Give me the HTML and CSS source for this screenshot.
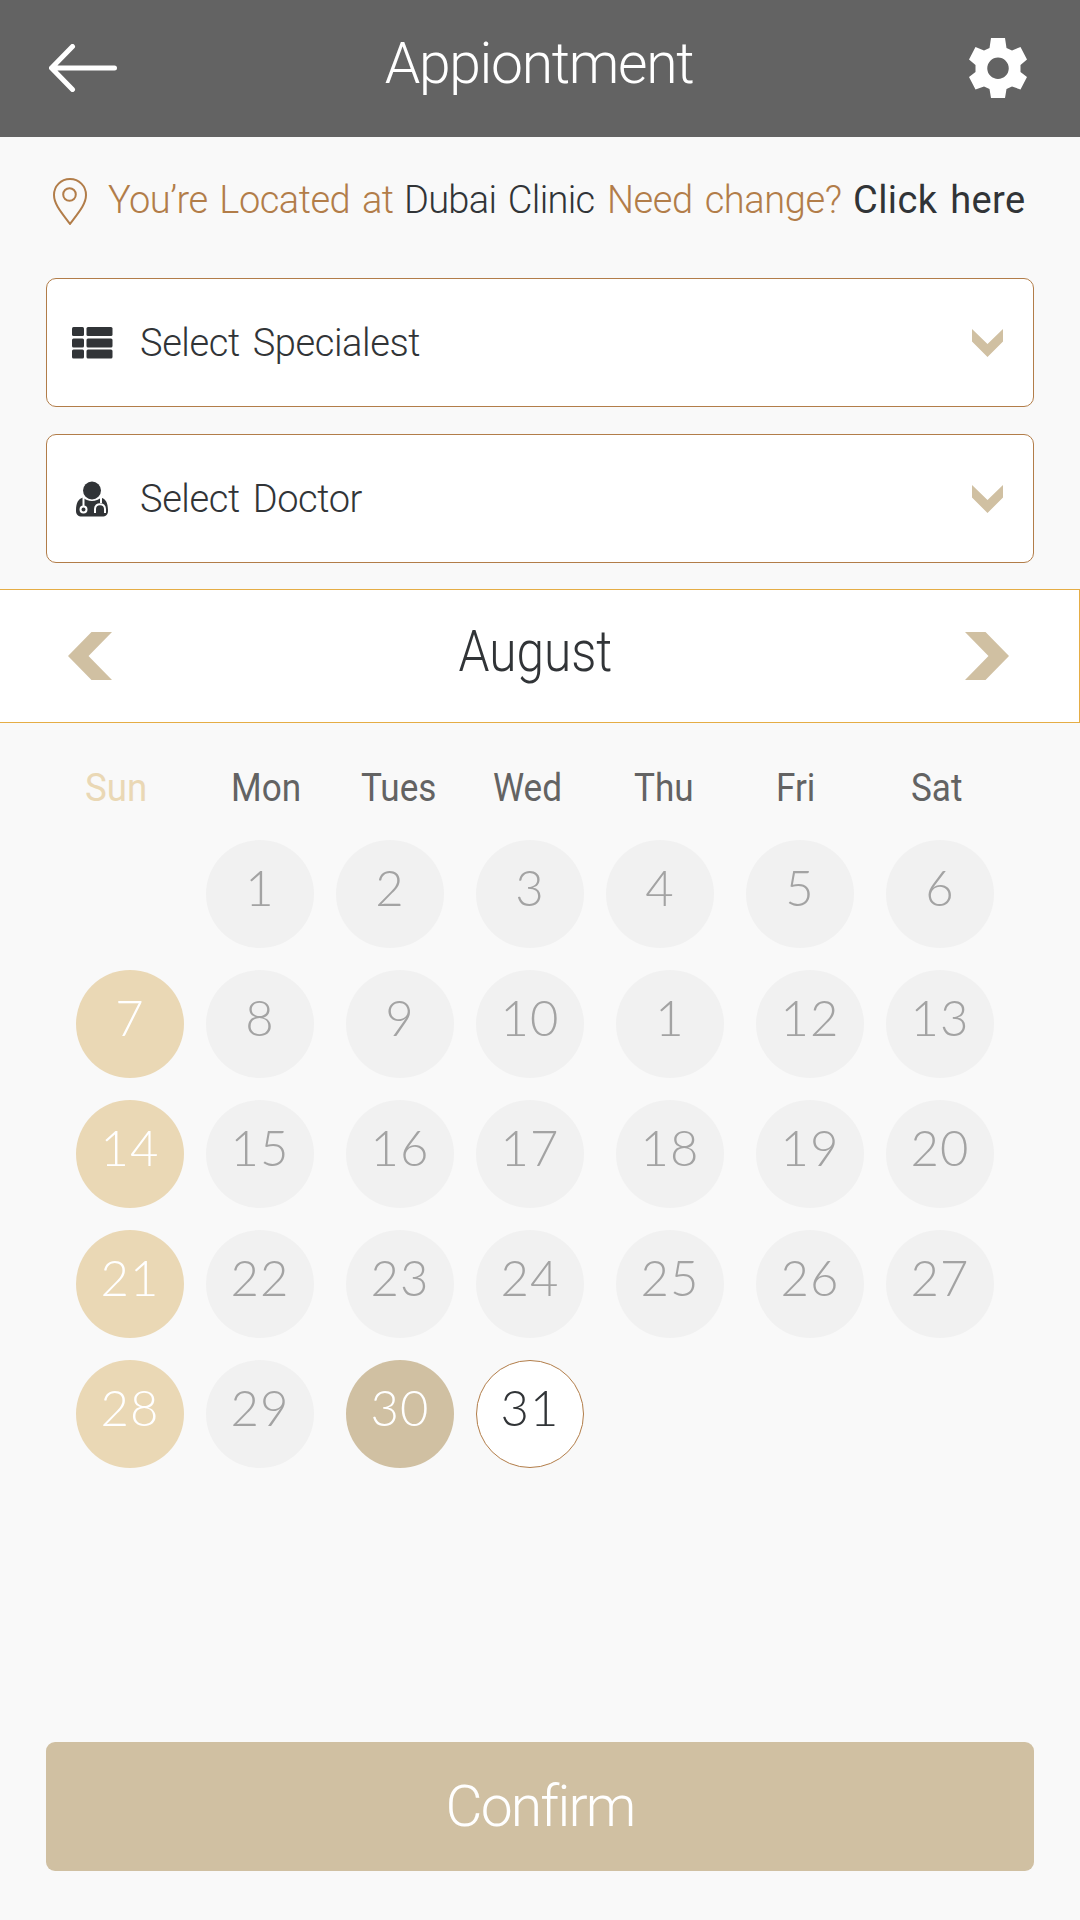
FILE: index.html
```html
<!DOCTYPE html>
<html lang="en">
<head>
  <meta charset="UTF-8" />
  <title>Appointment</title>
  <link rel="stylesheet" href="styles.css">
</head>
<body>
<header>
  <svg class="back" viewBox="0 0 68 48" width="68" height="48">
    <path d="M23.500 2.500L2.500 24L23.500 45.500M3 24H65.500" />
  </svg>
  <h1>Appiontment</h1>
  <svg class="gear" viewBox="0 0 58 60" width="58" height="60">
    <path fill-rule="evenodd" d="M22 0H36L37.500 10L43 12.500L51.500 9L58 21.500L51.500 27V34L58 39L51.500 51.500L43 48.500L37.500 51L36 60H22L20.500 51L15 48.500L6.500 51.500L0 39L6.500 34V27L0 21.500L6.500 9L15 12.500L20.500 10ZM29 19.500A10.700 10.700 0 1 0 29 41A10.700 10.700 0 1 0 29 19.500Z" />
  </svg>
</header>

<div class="location">
  <svg class="pin" viewBox="0 0 34 47" width="34" height="47">
    <path d="M17 1C8 1 1 8 1 17C1 26 8 34 17 46C26 34 33 26 33 17C33 8 26 1 17 1Z" />
    <circle cx="16.500" cy="16.500" r="6.300" />
  </svg>
  <span class="at">You’re Located at</span>
  <span class="clinic">Dubai Clinic</span>
  <span class="need">Need change?</span>
  <a class="click" href="#">Click here</a>
</div>

<div class="select">
  <svg class="icon" viewBox="0 0 44 36" width="44" height="36">
    <rect x="1" y="2" width="12" height="9" rx="1.500" />
    <rect x="15.500" y="2" width="26" height="9" rx="1.500" />
    <rect x="1" y="13.500" width="12" height="9" rx="1.500" />
    <rect x="15.500" y="13.500" width="26" height="9" rx="1.500" />
    <rect x="1" y="24.500" width="12" height="9" rx="1.500" />
    <rect x="15.500" y="24.500" width="26" height="9" rx="1.500" />
  </svg>
  <span>Select Specialest</span>
  <svg class="down" viewBox="0 0 31 28" width="31" height="28"><path d="M0 0L15.500 15L31 0V12.500L15.500 28L0 12.500Z" /></svg>
</div>

<div class="select">
  <svg class="icon" viewBox="0 0 44 36" width="44" height="36">
    <circle cx="21" cy="9.500" r="9" />
    <path d="M12 16.500C16 21 26 21 30 16.500C35 18 37 22 37 30C37 33.500 35 35.500 31 35.500H11C7 35.500 5 33.500 5 30C5 22 7 18 12 16.500Z" />
    <path class="tube" d="M12.500 16V26M30 16V22M24 32V28C24 21.500 34 21.500 34 28V32" />
    <circle class="tube" cx="12.500" cy="28.500" r="3" />
  </svg>
  <span>Select Doctor</span>
  <svg class="down" viewBox="0 0 31 28" width="31" height="28"><path d="M0 0L15.500 15L31 0V12.500L15.500 28L0 12.500Z" /></svg>
</div>

<div class="month">
  <svg viewBox="0 0 44 48" width="44" height="48"><path d="M0 24L23.500 0H44L20.500 24L44 48H23.500Z" /></svg>
  <h2>August</h2>
  <svg viewBox="0 0 44 48" width="44" height="48"><path d="M44 24L20.500 0H0L23.500 24L0 48H20.500Z" /></svg>
</div>

<div class="weekdays">
  <span class="sun">Sun</span>
  <span>Mon</span>
  <span>Tues</span>
  <span>Wed</span>
  <span>Thu</span>
  <span>Fri</span>
  <span>Sat</span>
</div>

<div class="week first">
  <div class="day">1</div>
  <div class="day">2</div>
  <div class="day">3</div>
  <div class="day">4</div>
  <div class="day">5</div>
  <div class="day">6</div>
</div>
<div class="week">
  <div class="day off">7</div>
  <div class="day">8</div>
  <div class="day">9</div>
  <div class="day">10</div>
  <div class="day">1</div>
  <div class="day">12</div>
  <div class="day">13</div>
</div>
<div class="week">
  <div class="day off">14</div>
  <div class="day">15</div>
  <div class="day">16</div>
  <div class="day">17</div>
  <div class="day">18</div>
  <div class="day">19</div>
  <div class="day">20</div>
</div>
<div class="week">
  <div class="day off">21</div>
  <div class="day">22</div>
  <div class="day">23</div>
  <div class="day">24</div>
  <div class="day">25</div>
  <div class="day">26</div>
  <div class="day">27</div>
</div>
<div class="week">
  <div class="day off">28</div>
  <div class="day">29</div>
  <div class="day selected">30</div>
  <div class="day open">31</div>
</div>

<button class="confirm">Confirm</button>
</body>
</html>
```
FILE: styles.css
```css
* {
  box-sizing: border-box;
}
body {
  margin: 0;
  height: 1920px;
  display: flex;
  flex-direction: column;
  background: #f9f9f9;
  font-family: Roboto, sans-serif;
  font-weight: 300;
  color: #313437;
}
header {
  background: #636363;
  color: white;
  height: 137px;
  padding: 0 53px 1px 49px;
  display: flex;
  justify-content: space-between;
  align-items: center;
}
header h1 {
  margin: 0 8px 9px 0;
  font-size: 57px;
  font-weight: 300;
  letter-spacing: -1.3px;
}
.back {
  fill: none;
  stroke: white;
  stroke-width: 5;
  stroke-linecap: round;
}
.gear {
  fill: white;
}
.location {
  height: 130px;
  margin-bottom: 11px;
  padding-left: 53px;
  display: grid;
  grid-template-columns: 55px 296px 203px 246px auto;
  align-items: center;
  font-size: 38px;
  line-height: 46px;
  white-space: nowrap;
  color: #b27d49;
}
.location span, .location a {
  margin-bottom: 5px;
}
.pin {
  margin-bottom: 1px;
  fill: none;
  stroke: #b27d49;
  stroke-width: 2;
}
.at {
  letter-spacing: -0.5px;
  word-spacing: 3px;
}
.clinic {
  color: #313437;
  letter-spacing: -0.7px;
  word-spacing: 3px;
}
.need {
  letter-spacing: -0.4px;
  word-spacing: 3px;
}
.click {
  color: #313437;
  font-weight: 400;
  letter-spacing: 0.4px;
  word-spacing: 3px;
  text-decoration: none;
}
.select {
  height: 129px;
  margin: 0 46px 27px;
  padding: 0 30px 0 24px;
  display: flex;
  align-items: center;
  background: white;
  border: 1px solid #b27d49;
  border-radius: 10px;
  font-size: 38px;
}
.select span {
  margin-left: 25px;
  flex: 1;
  letter-spacing: -0.4px;
  word-spacing: 4px;
}
.icon {
  fill: #313437;
}
.tube {
  fill: none;
  stroke: white;
  stroke-width: 2;
}
circle.tube {
  fill: #313437;
}
.down {
  fill: #d0c0a2;
}
.month {
  height: 134px;
  margin-top: -1px;
  padding: 0 70px 0 68px;
  display: flex;
  justify-content: space-between;
  align-items: center;
  background: white;
  border: 1px solid #e5ad45;
  border-left: none;
  fill: #d0c0a2;
}
.month h2 {
  margin: 0 6px 9px 0;
  font-size: 57px;
  font-weight: 300;
  transform: scaleX(0.87);
}
.weekdays {
  height: 46px;
  margin: 42px 0 29px;
  padding-left: 85px;
  display: grid;
  grid-template-columns: 146px 130px 132px 141px 142px 135px auto;
  font-size: 39px;
  line-height: 46px;
  font-weight: 400;
  color: #636363;
}
/* narrow day names */
.weekdays span {
  justify-self: start;
  transform: scaleX(0.9);
  transform-origin: left;
}
.weekdays .sun {
  color: #ead8b5;
  transform: scaleX(0.94);
}
.week {
  height: 108px;
  margin-bottom: 22px;
  padding-left: 76px;
  display: grid;
  grid-template-columns: 130px 140px 130px 140px 140px 130px 108px;
}
.week.first {
  padding-left: 206px;
  grid-template-columns: 130px 140px 130px 140px 140px 108px;
}
.day {
  width: 108px;
  height: 108px;
  padding-bottom: 14px;
  display: flex;
  align-items: center;
  justify-content: center;
  border-radius: 50%;
  background: #f1f1f1;
  color: #a3a3a3;
  font-family: Lato, sans-serif;
  font-size: 49px;
  letter-spacing: 1px;
}
.off {
  background: #ead8b5;
  color: white;
}
.selected {
  background: #d0c0a2;
  color: white;
}
.open {
  background: white;
  border: 1px solid #b27d49;
  color: #313437;
}
.confirm {
  height: 129px;
  margin: auto 46px 49px;
  border: none;
  border-radius: 9px;
  background: #d0c0a2;
  color: white;
  font-family: Roboto, sans-serif;
  font-size: 57px;
  font-weight: 300;
  letter-spacing: -1.8px;
}
```
